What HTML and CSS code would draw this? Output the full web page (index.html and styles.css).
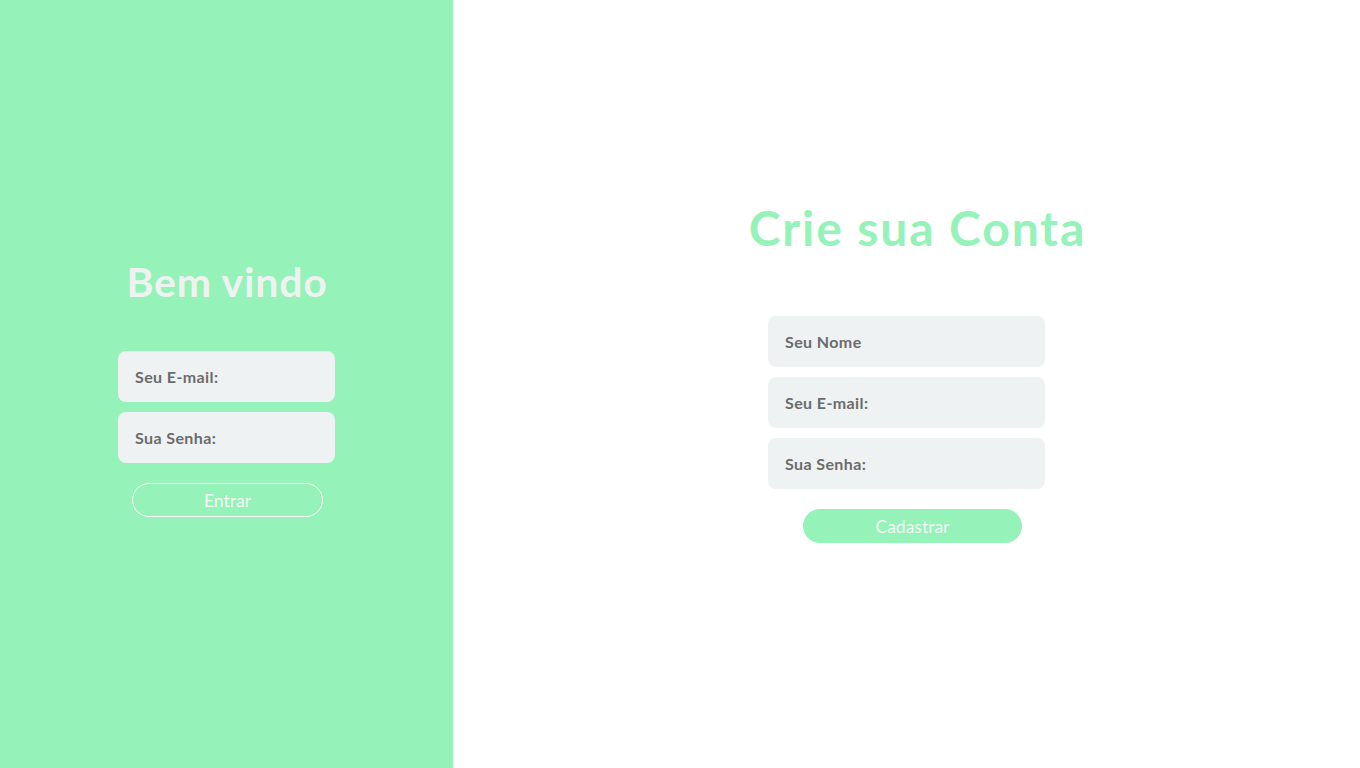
FILE: index.html
```html
<!DOCTYPE html>
<html lang="pt">
<head>
<meta charset="utf-8">
<title>Login / Cadastro</title>
<link rel="stylesheet" href="styles.css">
</head>
<body>
<div class="page">
  <section class="side">
    <div class="side-content">
      <h2 class="side-title">Bem vindo</h2>
      <form class="form form-small">
        <input class="field" type="email" placeholder="Seu E-mail:">
        <input class="field" type="password" placeholder="Sua Senha:">
        <button class="btn btn-outline" type="button">Entrar</button>
      </form>
    </div>
  </section>
  <section class="main">
    <div class="main-content">
      <h1 class="main-title">Crie sua Conta</h1>
      <form class="form form-large">
        <input class="field" type="text" placeholder="Seu Nome">
        <input class="field" type="email" placeholder="Seu E-mail:">
        <input class="field" type="password" placeholder="Sua Senha:">
        <button class="btn btn-solid" type="button">Cadastrar</button>
      </form>
    </div>
  </section>
</div>
</body>
</html>
```

FILE: styles.css
```css
* { box-sizing: border-box; }
html, body { margin: 0; padding: 0; }
body {
  font-family: "Lato", "Open Sans", sans-serif;
  background: #ffffff;
}
.page {
  display: flex;
  width: 1360px;
  height: 768px;
}
.side {
  width: 453px;
  background: #95f2b8;
  display: flex;
  flex-direction: column;
  align-items: center;
}
.side-content {
  margin-top: 254px;
  display: flex;
  flex-direction: column;
  align-items: center;
}
.side-title {
  margin: 0 0 0 1px;
  font-size: 41px;
  font-weight: 700;
  letter-spacing: 0.8px;
  color: #eef2f1;
  line-height: 56px;
  height: 56px;
}
.main {
  flex: 1;
  display: flex;
  flex-direction: column;
  align-items: center;
}
.main-content {
  margin-top: 196px;
  display: flex;
  flex-direction: column;
  align-items: center;
}
.main-title {
  margin: 0 0 0 22px;
  font-size: 48px;
  font-weight: 700;
  letter-spacing: 1.9px;
  color: #95f2b8;
  line-height: 64px;
  height: 64px;
}
.form {
  display: flex;
  flex-direction: column;
  align-items: center;
  gap: 10px;
}
.form-small { margin-top: 41px; }
.form-small .field { width: 217px; }
.form-large { margin-top: 56px; }
.form-large .field { width: 277px; }
.field {
  height: 51px;
  border: none;
  outline: none;
  border-radius: 8px;
  background: #eef2f3;
  padding: 0 17px;
  font-family: inherit;
  font-size: 16px;
  font-weight: 700;
  letter-spacing: 0.4px;
  color: #6b6b6b;
}
.field::placeholder {
  color: #6b6b6b;
  opacity: 1;
}
.btn {
  height: 34px;
  border-radius: 17px;
  font-family: inherit;
  font-size: 17.5px;
  font-weight: 400;
  color: #f4f8f6;
  cursor: pointer;
  padding: 0;
}
.btn-outline {
  margin-top: 10px;
  width: 191px;
  margin-left: 2px;
  background: transparent;
  border: 1px solid #ffffff;
}
.btn-solid {
  margin-top: 10px;
  width: 219px;
  margin-left: 12px;
  background: #95f2b8;
  border: none;
}
```
